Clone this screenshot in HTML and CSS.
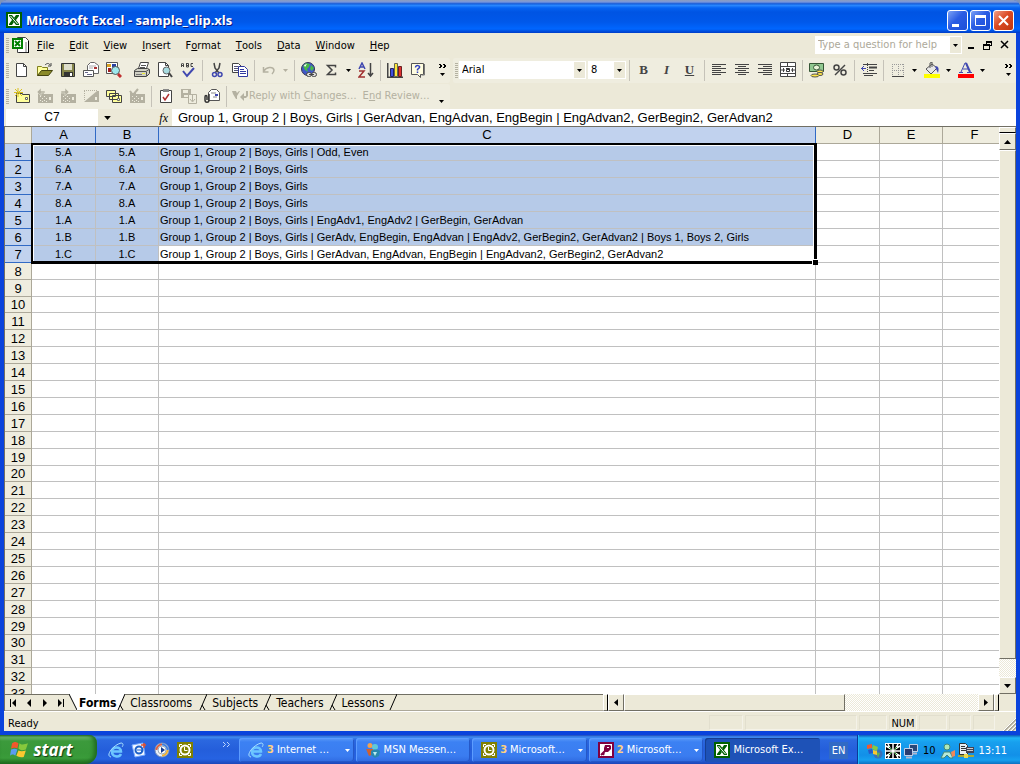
FILE: index.html
```html
<!DOCTYPE html>
<html lang="en">
<head>
<meta charset="utf-8">
<title>Microsoft Excel - sample_clip.xls</title>
<link rel="stylesheet" href="styles.css">
</head>
<body>
<svg class="sprite" aria-hidden="true">
  <symbol id="excel" viewBox="0 0 16 16"><path fill="#006000" d="M0 0h16v16H0z"/><path fill="#fff" d="M2 2h12v12H2z"/><path d="M3 3h3l7 9v1h-3L3 4zM13 3h-3L8 6l2 2 3-4zM3 13h3l2-3-2-2-3 4z" fill="#006000"/><path d="M4.500 4l7 8" stroke="#fff" fill="none"/></symbol>
  <symbol id="outlook" viewBox="0 0 16 16"><path fill="#808000" d="M0 0h16v16H0z"/><path d="M2.500 5V2.500H5M11 2.500h2.500V5M13.500 11v2.500H11M5 13.500H2.500V11" stroke="#fff" fill="none"/><circle cx="8" cy="8" r="4.500" stroke="#fff" stroke-width="2" fill="#808000"/><path d="M7.500 5v3.500h3" stroke="#fff" fill="none"/></symbol>
  <symbol id="access" viewBox="0 0 16 16"><path fill="#800040" d="M0 0h16v16H0z"/><path fill="#fff" d="M2 2h12v12H2z"/><path d="M3 13l5-5M5 13l1-2" stroke="#800040" stroke-width="2"/><path fill="#800040" d="M7 3h5l1 1v3l-3 3H7L6 9V6z"/><path fill="#fff" d="M9 5h2v1H9z"/></symbol>
  <symbol id="ie" viewBox="0 0 16 16"><path d="M13 12c-2 4-9 3-9-2.500C4 4 13 4 13 9.500H5" fill="none" stroke="#6cc6ff" stroke-width="2.500"/><path d="M3 15C-3 14 5 3 13 1c3 0 2 3 1 4" fill="none" stroke="#a8e0ff"/></symbol>
  <symbol id="down" viewBox="0 0 5 3"><path d="M0 0h5L2.500 3z" fill="currentColor"/></symbol>
  <symbol id="more" viewBox="0 0 8 14"><path d="M0 1l2 2-2 2M4 1l2 2-2 2M1 1l2 2-2 2M5 1l2 2-2 2" stroke="#000" fill="none"/><path d="M1 10h5l-2.500 3z"/></symbol>
  <symbol id="card" viewBox="0 0 16 16"><path d="M1 5h6v1h9v9H1z" fill="#b4b1a1"/><path d="M3 8h1v1H3zM5 10h1v1H5zM7 8h1v1H7zM9 10h1v1H9zM3 12h1v1H3zM7 12h1v1H7zM5 13h1v1H5zM9 13h1v1H9zM12 9h2v3h-2z" fill="#efeddf"/></symbol>
</svg>

<main class="window">
  <header class="titlebar">
    <svg class="icon"><use href="#excel"/></svg>
    <h1>Microsoft Excel - sample_clip.xls</h1>
    <button class="caption" aria-label="Minimize"><svg viewBox="0 0 19 19"><path d="M4 13h7v3H4z" fill="#fff"/></svg></button>
    <button class="caption" aria-label="Maximize"><svg viewBox="0 0 19 19"><path d="M4.500 5v9.500h10V5" fill="none" stroke="#fff"/><path d="M4 4h11v3H4z" fill="#fff"/></svg></button>
    <button class="caption close" aria-label="Close"><svg viewBox="0 0 19 19"><path d="M5 5l9 9M14 5l-9 9" stroke="#fff" stroke-width="2"/></svg></button>
  </header>

  <nav class="menubar">
    <span class="grip"></span>
    <svg class="book" viewBox="0 0 18 16"><path d="M5.500.500h8l3 3v12h-11z" fill="#fff" stroke="#444"/><path d="M14 5v10" stroke="#777"/><path d="M16.500 4v12H7" stroke="#000" fill="none"/><path fill="#008000" d="M0 1h11v11H0z"/><path fill="#fff" d="M2 3h7v7H2z"/><path d="M3 4l5 5M8 4L3 9" stroke="#008000" stroke-width="2"/></svg>
    <div class="menus">
      <button><u>F</u>ile</button><button><u>E</u>dit</button><button><u>V</u>iew</button><button><u>I</u>nsert</button><button>F<u>o</u>rmat</button><button><u>T</u>ools</button><button><u>D</u>ata</button><button><u>W</u>indow</button><button><u>H</u>ep</button>
    </div>
    <div class="question">
      <input type="text" aria-label="Question" placeholder="Type a question for help">
      <button aria-label="Recent questions"><svg class="arrow"><use href="#down"/></svg></button>
    </div>
    <button class="mdi" aria-label="Minimize workbook"><svg viewBox="0 0 10 10"><path d="M2 7h6v2H2z"/></svg></button>
    <button class="mdi" aria-label="Restore workbook"><svg viewBox="0 0 10 10"><path d="M3 1h6v5H7V5h1V3H4v1H3zM0 4h7v6H0zM1 6v3h5V6z" fill-rule="evenodd"/></svg></button>
    <button class="mdi" aria-label="Close workbook"><svg viewBox="0 0 10 10"><path d="M1 1l7 7M8 1L1 8" stroke="#000" stroke-width="1.500"/></svg></button>
  </nav>

  <div class="bars">
    <div class="toolbar standard">
      <span class="grip"></span>
      <button aria-label="New"><svg class="icon" viewBox="0 0 16 16"><path d="M2.500 1.500h7l3 3v10h-10z" fill="#fff" stroke="#444"/><path d="M9.500 1.500v3h3" fill="none" stroke="#444"/></svg></button>
      <button aria-label="Open"><svg class="icon" viewBox="0 0 16 16"><path d="M.500 13.500v-9h4l1 1h5v3" fill="#ffff9c" stroke="#808020"/><path d="M.500 13.500l4-5h11l-4 5z" fill="#8a8a28" stroke="#444410"/><path d="M8 3c2-2 4-2 5 0M14 1v3h-3" fill="none" stroke="#444"/></svg></button>
      <button aria-label="Save"><svg class="icon" viewBox="0 0 16 16"><path d="M1.500 1.500h13v13h-13z" fill="#84844a" stroke="#333"/><path d="M4 2h8v6H4z" fill="#dedecb"/><path d="M4 10h9v4H4z" fill="#333"/><path d="M10 11h2v3h-2z" fill="#fff"/></svg></button>
      <button aria-label="E-mail"><svg class="icon" viewBox="0 0 16 16"><path d="M4.500 8.500v-5l3-3h4l4 3v8h-6" fill="#fff" stroke="#666"/><path d="M6 4h7M6 6h4" stroke="#aaa"/><path d="M11 5h3v2h-3z" fill="#a33"/><path d="M.500 8.500h10v6H.500z" fill="#fff" stroke="#555"/><path d="M2 10.500h3M4 12.500h5" stroke="#668"/></svg></button>
      <button aria-label="Search"><svg class="icon" viewBox="0 0 16 16"><path d="M.500.500h11v11h-11z" fill="#fff" stroke="#555"/><path d="M1 2h4v3H1z" fill="#d8a020"/><path d="M6 2h4v3H6z" fill="#2840a0"/><path d="M2 6h3v4H2z" fill="#a02020"/><circle cx="9.500" cy="8.500" r="4" fill="#9ee8ee" stroke="#555"/><path d="M12 12l3 3" stroke="#c03030" stroke-width="3"/></svg></button>
      <span class="space"></span>
      <button aria-label="Print"><svg class="icon" viewBox="0 0 16 16"><path d="M4.500 6.500l2-6h8l-2 6z" fill="#fff" stroke="#444"/><path d="M7 3.500h5M6 5.500h5" stroke="#555"/><path d="M.500 8.500l3-2h10l2 1v4l-3 3h-12z" fill="#d0d0c4" stroke="#444"/><path d="M1 9.500h11l3-2M12.500 10v4" stroke="#555" fill="none"/><path d="M2 12.500h6" stroke="#777"/><path d="M8 11h3v1H8z" fill="#ee3"/></svg></button>
      <button aria-label="Print preview"><svg class="icon" viewBox="0 0 16 16"><path d="M1.500.500h7l3 3v11h-10z" fill="#fff" stroke="#444"/><path d="M8.500.500v3h3" fill="none" stroke="#444"/><circle cx="9.500" cy="8.500" r="3.500" fill="#a8dce0" stroke="#666"/><path d="M12 11l3 4" stroke="#444" stroke-width="2"/></svg></button>
      <button aria-label="Spelling"><svg class="icon" viewBox="0 0 16 16"><path d="M1.500 5V2l1-1 1 1v3M2 3.500h2M6.500 1v4h2V1.500H6M6 3.500h2M13 1.500h-2v3h2" stroke="#444" fill="none"/><path d="M3 9l4 5 7-8" fill="none" stroke="#4048b0" stroke-width="2"/></svg></button>
      <span class="sep"></span>
      <button aria-label="Cut"><svg class="icon" viewBox="0 0 16 16"><path d="M5 1l1 5 4 5M11 1l-1 5-4 5" stroke="#444" stroke-width="1.500" fill="none"/><circle cx="5.500" cy="12.500" r="2" fill="none" stroke="#4048b0" stroke-width="1.500"/><circle cx="11" cy="12.500" r="2" fill="none" stroke="#4048b0" stroke-width="1.500"/></svg></button>
      <button aria-label="Copy"><svg class="icon" viewBox="0 0 16 16"><path d="M.500 1.500h6l3 3v6h-9z" fill="#fff" stroke="#444"/><path d="M2 4.500h4M2 6.500h4M2 8.500h4" stroke="#557"/><path d="M6.500 4.500h6l3 3v7h-9z" fill="#fff" stroke="#3038a0"/><path d="M8 7.500h4M8 9.500h6M8 11.500h6" stroke="#3038a0"/></svg></button>
      <span class="sep"></span>
      <button aria-label="Undo"><svg class="icon" viewBox="0 0 16 16"><path d="M2.500 5v5h5M3 9c2-4 9-5 10-1 0 2-1 3-2 4" fill="none" stroke="#b4b1a1" stroke-width="1.500"/></svg></button>
      <button class="drop off" aria-label="Undo list"><svg class="arrow"><use href="#down"/></svg></button>
      <span class="sep"></span>
      <button aria-label="Insert hyperlink"><svg class="icon" viewBox="0 0 16 16"><circle cx="7" cy="7" r="6.500" fill="#4058c8" stroke="#335"/><path d="M5 1l4 1-1 3-2 2 1 3-3-2-2-4zM10 3l3 3-2 3-2-2z" fill="#48b848"/><path d="M3 3l3-1-2 3z" fill="#fff"/><rect x="5.500" y="10.500" width="5" height="4" rx="2" fill="#ddd" stroke="#444"/><rect x="10.500" y="10.500" width="5" height="4" rx="2" fill="#ddd" stroke="#444"/><path d="M8 12.500h5" stroke="#444"/></svg></button>
      <button aria-label="AutoSum"><svg class="icon" viewBox="0 0 16 16"><path d="M11.500 5.500v-2H3.500L8 8l-4.500 4.500h8v-2" fill="none" stroke="#444" stroke-width="1.500"/></svg></button>
      <button class="drop" aria-label="AutoSum list"><svg class="arrow"><use href="#down"/></svg></button>
      <button aria-label="Sort ascending"><svg class="icon" viewBox="0 0 16 16"><path d="M1 7l3-6 3 6M2 5h4" fill="none" stroke="#4048b0" stroke-width="1.500"/><path d="M1 9h5l-5 6h6" fill="none" stroke="#a03030" stroke-width="1.500"/><path d="M12.500 1v13M10 11l2.500 3 2.500-3" fill="none" stroke="#444" stroke-width="1.500"/></svg></button>
      <span class="sep"></span>
      <button aria-label="Chart"><svg class="icon" viewBox="0 0 16 16"><path d="M.500 1v14.500H16" fill="none" stroke="#444" stroke-width="2"/><path d="M3.500 6.500h3v8h-3z" fill="#4050e0" stroke="#226"/><path d="M7.500 1.500h3v13h-3z" fill="#ffe838" stroke="#665"/><path d="M11.500 4.500h3v10h-3z" fill="#e03030" stroke="#622"/></svg></button>
      <button aria-label="Help"><svg class="icon" viewBox="0 0 16 16"><path d="M1.500 1.500h12v11h-3v3l-3-3h-6z" fill="#fffde0" stroke="#555"/><path d="M14.500 2v11h-3" fill="none" stroke="#777"/><path d="M5.500 5.500c0-3 5-2 4 0l-2 2v1M7.500 9.500V11" fill="none" stroke="#3040c0" stroke-width="1.500"/></svg></button>
      <button class="options" aria-label="Standard toolbar options"><svg><use href="#more"/></svg></button>
    </div>
    <div class="toolbar formatting">
      <span class="grip"></span>
      <label class="combo font"><select aria-label="Font"><option>Arial</option></select><span><svg class="arrow"><use href="#down"/></svg></span></label>
      <label class="combo size"><select aria-label="Font size"><option>8</option></select><span><svg class="arrow"><use href="#down"/></svg></span></label>
      <span class="sep"></span>
      <button class="letter" aria-label="Bold"><b>B</b></button>
      <button class="letter" aria-label="Italic"><i>I</i></button>
      <button class="letter" aria-label="Underline"><u>U</u></button>
      <span class="sep"></span>
      <button aria-label="Align left"><svg class="icon" viewBox="0 0 16 16"><path d="M1 2.500h14M1 4.500h9M1 6.500h14M1 8.500h9M1 10.500h14M1 12.500h9" stroke="#444"/></svg></button>
      <button aria-label="Center"><svg class="icon" viewBox="0 0 16 16"><path d="M1 2.500h14M4 4.500h8M1 6.500h14M4 8.500h8M1 10.500h14M4 12.500h8" stroke="#444"/></svg></button>
      <button aria-label="Align right"><svg class="icon" viewBox="0 0 16 16"><path d="M1 2.500h14M6 4.500h9M1 6.500h14M6 8.500h9M1 10.500h14M6 12.500h9" stroke="#444"/></svg></button>
      <button aria-label="Merge and center"><svg class="icon" viewBox="0 0 16 16"><path d="M.500.500h15v14H.500z" fill="#fff" stroke="#444"/><path d="M0 4.500h16M0 11.500h16M7.500 0v4M7.500 12v3" stroke="#444"/><path d="M1 8h4M11 8h4M3.500 6v4M12.500 6v4" stroke="#444"/><path d="M6 6.500h3.500v3h-3v-2h3" fill="none" stroke="#333"/></svg></button>
      <span class="sep"></span>
      <button aria-label="Currency"><svg class="icon" viewBox="0 0 16 16"><path d="M.500 1.500h14v8H.500z" fill="#90c890" stroke="#355535"/><ellipse cx="7.500" cy="5.500" rx="3" ry="2.500" fill="#e8f4d8" stroke="#355535"/><ellipse cx="11" cy="9.500" rx="3" ry="1.500" fill="#ffe848" stroke="#555"/><ellipse cx="11" cy="12" rx="3" ry="1.500" fill="#ffe848" stroke="#555"/><ellipse cx="6" cy="13.500" rx="4" ry="1.500" fill="#ffe848" stroke="#555"/></svg></button>
      <button aria-label="Percent"><svg class="icon" viewBox="0 0 16 16"><circle cx="4.500" cy="5.500" r="2.500" fill="none" stroke="#444" stroke-width="1.500"/><circle cx="11.500" cy="10.500" r="2.500" fill="none" stroke="#444" stroke-width="1.500"/><path d="M13 3L3 13" stroke="#444" stroke-width="1.500"/></svg></button>
      <span class="sep"></span>
      <button aria-label="Decrease indent"><svg class="icon" viewBox="0 0 16 16"><path d="M2 2.500h14M8 8.500h5M2 11.500h14M3 13.500h9" stroke="#444"/><path d="M8 5.500h8" stroke="#444" stroke-width="2"/><path d="M0 6.500h5M3 4L.500 6.500 3 9" fill="none" stroke="#4048b0"/><path d="M6.500 1v14" stroke="#444" stroke-dasharray="1 1"/></svg></button>
      <span class="sep"></span>
      <button aria-label="Borders"><svg class="icon" viewBox="0 0 16 16"><path d="M2.500 2v12M8.500 2v12M13.500 2v12M2 2.500h12M2 8.500h12" stroke="#999" stroke-dasharray="1 1"/><path d="M2 14.500h12" stroke="#444"/></svg></button>
      <button class="drop" aria-label="Borders list"><svg class="arrow"><use href="#down"/></svg></button>
      <button aria-label="Fill color"><svg class="icon" viewBox="0 0 16 16"><path d="M2 7l6-5 5 4-6 6z" fill="#e8e8e8" stroke="#555"/><path d="M6 6V1l2-1v5" fill="none" stroke="#555"/><path d="M11 4c4 0 4 3 3 7l-2-4z" fill="#4048b0"/><path d="M0 12h16v4H0z" fill="#ff0"/></svg></button>
      <button class="drop" aria-label="Fill color list"><svg class="arrow"><use href="#down"/></svg></button>
      <button aria-label="Font color"><svg class="icon" viewBox="0 0 16 16"><path d="M3 10l4-9h1l4 9M5 7h6M1 10.500h4M9 10.500h5" fill="none" stroke="#4048b0"/><path d="M8 1l4 9" stroke="#4048b0" stroke-width="2"/><path d="M0 12h16v4H0z" fill="#f00"/></svg></button>
      <button class="drop" aria-label="Font color list"><svg class="arrow"><use href="#down"/></svg></button>
      <button class="options" aria-label="Formatting toolbar options"><svg><use href="#more"/></svg></button>
    </div>
  </div>

  <div class="bars">
    <div class="toolbar review">
      <span class="grip"></span>
      <button aria-label="New comment"><svg class="icon" viewBox="0 0 16 16"><path d="M2.500 5.500h6v1h7v8h-13z" fill="#ffff9c" stroke="#444"/><path d="M11.500 9.500h2v2h-2z" fill="#fff" stroke="#666"/><path d="M4 0v9M0 4.500h9M1 1l7 7M8 1L1 8" stroke="#d8c020"/></svg></button>
      <button disabled aria-label="Previous comment"><svg class="icon" viewBox="0 0 16 16"><use href="#card" width="16" height="16"/><path d="M0 4l4-4v3h4v2H4v3z" fill="#b4b1a1" stroke="#efeddf" stroke-width=".500"/></svg></button>
      <button disabled aria-label="Next comment"><svg class="icon" viewBox="0 0 16 16"><use href="#card" width="16" height="16"/><path d="M9 4L5 0v3H1v2h4v3z" fill="#b4b1a1" stroke="#efeddf" stroke-width=".500"/></svg></button>
      <button disabled aria-label="Show comment"><svg class="icon" viewBox="0 0 16 16"><path d="M1 14L14 3h2v11z" fill="#b4b1a1"/><path d="M1 2.500h14M1.500 3v10" fill="none" stroke="#b4b1a1" stroke-dasharray="1 1"/><path d="M12 9h2v3h-2z" fill="#efeddf"/></svg></button>
      <button aria-label="Show all comments"><svg class="icon" viewBox="0 0 16 16"><path d="M.500 2.500h9v6h-9zM3.500 5.500h9v6h-9zM6.500 7.500h9v7h-9z" fill="#ffff9c" stroke="#444"/><path d="M11.500 10.500h2v2h-2z" fill="#fff" stroke="#666"/></svg></button>
      <button disabled aria-label="Delete comment"><svg class="icon" viewBox="0 0 16 16"><use href="#card" width="16" height="16"/><path d="M1 3l3 4 5-6" fill="none" stroke="#b4b1a1" stroke-width="2"/></svg></button>
      <span class="sep"></span>
      <button aria-label="Create task"><svg class="icon" viewBox="0 0 16 16"><path d="M2.500 2.500h11v12h-11z" fill="#fff" stroke="#444"/><path d="M5 1h6v3H5z" fill="#888"/><path d="M5 9l2 3 4-6" fill="none" stroke="#b03030" stroke-width="1.500"/></svg></button>
      <button disabled aria-label="Update file"><svg class="icon" viewBox="0 0 16 16"><path d="M0 1h10v9H0z" fill="#b4b1a1"/><path d="M2 2h5v3H2zM3 7h4v2H3z" fill="#efeddf"/><path d="M7.500 6.500h8v9h-8z" fill="#efeddf" stroke="#b4b1a1"/><path d="M11.500 7v6M9 11l2.500 3 2.500-3" fill="none" stroke="#b4b1a1"/></svg></button>
      <button aria-label="Send by mail"><svg class="icon" viewBox="0 0 16 16"><path d="M4.500 12.500v-8l3-3h5l3 3v8z" fill="#fff" stroke="#555"/><path d="M7 5h5M9 9h4" stroke="#888"/><path d="M11 6h3v2h-3z" fill="#4048b0"/><path d="M5 6v6c0 3-4 3-4 0V9c0-2 2-2 2 0v3" fill="none" stroke="#333" stroke-width="1.500"/></svg></button>
      <span class="sep"></span>
      <button disabled class="text"><svg class="icon" viewBox="0 0 16 16"><path d="M0 3h4l1 2 2-2h1L5 8v3H4L1 6zM8 9l4-4v3h2V3h2v5l-2 2h-2v3z" fill="#b4b1a1"/></svg><span>Reply with <u>C</u>hanges…</span></button>
      <button disabled class="text"><span>E<u>n</u>d Review…</span></button>
      <button class="drop low" aria-label="Reviewing toolbar options"><svg class="arrow"><use href="#down"/></svg></button>
    </div>
  </div>

  <div class="formula">
    <input class="name" type="text" value="C7" aria-label="Name box">
    <button class="namelist" aria-label="Names"><svg class="arrow wide"><use href="#down"/></svg></button>
    <button class="fx" aria-label="Insert function"><i>fx</i></button>
    <input class="content" type="text" aria-label="Formula bar" value="Group 1, Group 2 | Boys, Girls | GerAdvan, EngAdvan, EngBegin | EngAdvan2, GerBegin2, GerAdvan2">
  </div>

  <section class="sheet">
    <div class="cells">
      <table>
        <colgroup><col class="w-head"><col class="w-a"><col class="w-b"><col class="w-c"><col class="w-a"><col class="w-b"><col></colgroup>
        <thead><tr><th></th><th class="on">A</th><th class="on">B</th><th class="on">C</th><th>D</th><th>E</th><th>F</th></tr></thead>
        <tbody>
          <tr class="on"><th>1</th><td>5.A</td><td>5.A</td><td>Group 1, Group 2 | Boys, Girls | Odd, Even</td><td><td><td>
          <tr class="on"><th>2</th><td>6.A</td><td>6.A</td><td>Group 1, Group 2 | Boys, Girls</td><td><td><td>
          <tr class="on"><th>3</th><td>7.A</td><td>7.A</td><td>Group 1, Group 2 | Boys, Girls</td><td><td><td>
          <tr class="on"><th>4</th><td>8.A</td><td>8.A</td><td>Group 1, Group 2 | Boys, Girls</td><td><td><td>
          <tr class="on"><th>5</th><td>1.A</td><td>1.A</td><td>Group 1, Group 2 | Boys, Girls | EngAdv1, EngAdv2 | GerBegin, GerAdvan</td><td><td><td>
          <tr class="on"><th>6</th><td>1.B</td><td>1.B</td><td>Group 1, Group 2 | Boys, Girls | GerAdv, EngBegin, EngAdvan | EngAdv2, GerBegin2, GerAdvan2 | Boys 1, Boys 2, Girls</td><td><td><td>
          <tr class="on"><th>7</th><td>1.C</td><td>1.C</td><td class="active">Group 1, Group 2 | Boys, Girls | GerAdvan, EngAdvan, EngBegin | EngAdvan2, GerBegin2, GerAdvan2</td><td><td><td>
          <tr><th>8<td><td><td><td><td><td>
          <tr><th>9<td><td><td><td><td><td>
          <tr><th>10<td><td><td><td><td><td>
          <tr><th>11<td><td><td><td><td><td>
          <tr><th>12<td><td><td><td><td><td>
          <tr><th>13<td><td><td><td><td><td>
          <tr><th>14<td><td><td><td><td><td>
          <tr><th>15<td><td><td><td><td><td>
          <tr><th>16<td><td><td><td><td><td>
          <tr><th>17<td><td><td><td><td><td>
          <tr><th>18<td><td><td><td><td><td>
          <tr><th>19<td><td><td><td><td><td>
          <tr><th>20<td><td><td><td><td><td>
          <tr><th>21<td><td><td><td><td><td>
          <tr><th>22<td><td><td><td><td><td>
          <tr><th>23<td><td><td><td><td><td>
          <tr><th>24<td><td><td><td><td><td>
          <tr><th>25<td><td><td><td><td><td>
          <tr><th>26<td><td><td><td><td><td>
          <tr><th>27<td><td><td><td><td><td>
          <tr><th>28<td><td><td><td><td><td>
          <tr><th>29<td><td><td><td><td><td>
          <tr><th>30<td><td><td><td><td><td>
          <tr><th>31<td><td><td><td><td><td>
          <tr><th>32<td><td><td><td><td><td>
          <tr><th>33<td><td><td><td><td><td>
        </tbody>
      </table>
      <div class="selection"></div>
    </div>
    <div class="vscroll">
      <span class="split"></span>
      <button aria-label="Scroll up"><svg viewBox="0 0 7 4"><path d="M0 4h7L3.500 0z"/></svg></button>
      <span class="thumb"></span><span class="track"></span>
      <button aria-label="Scroll down"><svg viewBox="0 0 7 4"><path d="M0 0h7L3.500 4z"/></svg></button>
    </div>
  </section>

  <div class="bottom">
    <div class="tabs">
      <button class="step" aria-label="First sheet"><svg viewBox="0 0 8 8"><path d="M1 0h1v8H1zM7 0v8L3 4z"/></svg></button>
      <button class="step" aria-label="Previous sheet"><svg viewBox="0 0 8 8"><path d="M6 0v8L2 4z"/></svg></button>
      <button class="step" aria-label="Next sheet"><svg viewBox="0 0 8 8"><path d="M2 0v8l4-4z"/></svg></button>
      <button class="step" aria-label="Last sheet"><svg viewBox="0 0 8 8"><path d="M6 0h1v8H6zM1 0v8l4-4z"/></svg></button>
      <svg class="slant" viewBox="0 0 8 17"><path d="M0 0h8v17z" fill="#fff"/><path d="M0 0l8 16" stroke="#000"/></svg>
      <button class="tab current">Forms</button>
      <svg class="slant" viewBox="0 0 8 17"><path d="M0 0h8L2 16H0z" fill="#fff"/><path d="M8 0L1 16M3 11l3 5" stroke="#000" fill="none"/></svg>
      <button class="tab long">Classrooms</button>
      <svg class="slant" viewBox="0 0 8 17"><path d="M8 0L1 16M3 11l3 5" stroke="#000" fill="none"/></svg>
      <button class="tab">Subjects</button>
      <svg class="slant" viewBox="0 0 8 17"><path d="M8 0L1 16M3 11l3 5" stroke="#000" fill="none"/></svg>
      <button class="tab">Teachers</button>
      <svg class="slant" viewBox="0 0 8 17"><path d="M8 0L1 16M3 11l3 5" stroke="#000" fill="none"/></svg>
      <button class="tab">Lessons</button>
      <svg class="slant" viewBox="0 0 8 17"><path d="M8 0L1 16" stroke="#000" fill="none"/></svg>
    </div>
    <div class="hscroll">
      <span class="split"></span>
      <button aria-label="Scroll left"><svg viewBox="0 0 4 7"><path d="M4 0v7L0 3.500z"/></svg></button>
      <span class="thumb"></span><span class="track"></span>
      <button aria-label="Scroll right"><svg viewBox="0 0 4 7"><path d="M0 0v7l4-3.500z"/></svg></button>
      <span class="split"></span>
    </div>
  </div>

  <footer class="status">
    <span class="ready">Ready</span>
    <span class="pane p1"></span><span class="pane p2"></span><span class="pane p3"></span>
    <span class="pane p3">NUM</span><span class="pane p3"></span><span class="pane p4"></span><span class="pane p4"></span>
    <svg class="resize" viewBox="0 0 13 13"><path d="M1 13L13 1M5 13l8-8M9 13l4-4" stroke="#aca899" stroke-width="2"/><path d="M0 13L13 0M4 13l9-9M8 13l5-5" stroke="#fff"/></svg>
  </footer>
</main>

<div class="taskbar">
  <button class="start"><svg viewBox="0 0 18 18"><path d="M2 3c3-2 4-1 6 0L7 8C5 7 4 7 1 8z" fill="#f0582c"/><path d="M9 3c2 2 5 1 8 0l-2 6c-3 1-5 1-7-1z" fill="#86c83c"/><path d="M1 9c3-1 4-1 6 0l-2 6c-2-2-4-1-5 0z" fill="#5a9cf0"/><path d="M8 10c2 1 4 1 7 0l-2 6c-3 1-5 0-7-1z" fill="#fbc830"/></svg>start</button>
  <div class="quick">
    <button aria-label="Internet Explorer"><svg class="icon"><use href="#ie"/></svg></button>
    <button aria-label="Outlook Express"><svg class="icon" viewBox="0 0 16 16"><path d="M1 3l11-2 2 12-10 2z" fill="#f4f8ff" stroke="#7af"/><circle cx="8" cy="8" r="3.500" fill="none" stroke="#1c60c8" stroke-width="2"/><path d="M6 8h5l-1 3" stroke="#1c60c8" fill="none"/><path d="M10 3h5M13 1v5" fill="none" stroke="#e05030" stroke-width="1.500"/></svg></button>
    <button aria-label="Media Player"><svg class="icon" viewBox="0 0 16 16"><circle cx="8" cy="8" r="7" fill="#e8eef8" stroke="#7890b8"/><path d="M2.500 8A5.500 5.500 0 0 1 8 2.500" stroke="#e06040" stroke-width="2" fill="none"/><path d="M8 2.500A5.500 5.500 0 0 1 13.500 8" stroke="#4080e0" stroke-width="2" fill="none"/><path d="M13.500 8A5.500 5.500 0 0 1 8 13.500" stroke="#f0b030" stroke-width="2" fill="none"/><circle cx="8" cy="8" r="4" fill="#fff" stroke="#9ab"/><path d="M7 5l4 3-4 3z" fill="#123a90"/></svg></button>
    <button aria-label="Outlook"><svg class="icon"><use href="#outlook"/></svg></button>
    <button class="chev" aria-label="More quick launch"><svg viewBox="0 0 8 6"><path d="M0 0l2.500 2.500L0 5M4 0l2.500 2.500L4 5" stroke="#bcd6ff" fill="none"/></svg></button>
  </div>
  <div class="tasks">
    <button class="task"><svg class="icon"><use href="#ie"/></svg><b>3</b><span>Internet …</span><svg class="arrow"><use href="#down"/></svg></button>
    <button class="task"><svg class="icon" viewBox="0 0 16 16"><circle cx="5" cy="3.500" r="2.500" fill="#f0a050"/><path d="M1 7h7l1 5-5 2z" fill="#d06030"/><circle cx="10" cy="5" r="3" fill="#60c8d8"/><path d="M6 9c2-2 7-2 9 0l-1 5-4 2-4-3z" fill="#2888b0"/><path d="M8 10l2 4 2-4" fill="#b8ecf0"/></svg><span>MSN Messen…</span></button>
    <button class="task"><svg class="icon"><use href="#outlook"/></svg><b>3</b><span>Microsoft…</span><svg class="arrow"><use href="#down"/></svg></button>
    <button class="task"><svg class="icon"><use href="#access"/></svg><b>2</b><span>Microsoft…</span><svg class="arrow"><use href="#down"/></svg></button>
    <button class="task pressed"><svg class="icon"><use href="#excel"/></svg><span>Microsoft Ex…</span></button>
  </div>
  <button class="lang">EN</button>
  <div class="tray">
    <svg class="icon" viewBox="0 0 16 16"><circle cx="11" cy="11" r="4.500" fill="#3a70b8"/><path d="M9 9l4 1-2 5z" fill="#60b050"/><path d="M0 2l5-1v4L0 6z" fill="#f05a30"/><path d="M6 2l5 2-1 4-5-2z" fill="#88c840"/><path d="M1 7l4-1 1 4-4 1z" fill="#2858c8"/><path d="M6 7l4 1v4l-4-1z" fill="#f8c830"/></svg>
    <svg class="icon" viewBox="0 0 16 16"><path fill="#fff" d="M0 0h16v16H0z"/><path fill="#000" d="M1 1h14v14H1z"/><path d="M1 3l5 3M3 1l2 4M15 3l-5 3M13 1l-2 4M1 13l5-3M3 15l2-4M15 13l-5-3M13 15l-2-4M8 1v5M8 10v5M1 8h5M10 8h5" stroke="#fff" stroke-width="1.500"/><path d="M4 4l8 8M12 4l-8 8" stroke="#28a028"/><circle cx="8" cy="8" r="2" fill="#fff"/></svg>
    <svg class="icon" viewBox="0 0 16 16"><path d="M6.500 1.500h8v7h-8z" fill="#284878" stroke="#c0d0e8"/><path d="M1.500 5.500h8v7h-8z" fill="#283c70" stroke="#c0d0e8"/><path d="M3 14.500h6M9 10.500h5" stroke="#b0b8d0" stroke-width="2"/></svg>
    <span class="count">10</span>
    <svg class="icon" viewBox="0 0 16 16"><circle cx="7" cy="4" r="3" fill="#b0e8b8" stroke="#487"/><path d="M1 15l3-6h6l3 6h-3l-3-3-3 3z" fill="#b8e8d8" stroke="#487"/><path d="M11 9l4-2v6l-3 1z" fill="#f08858"/></svg>
    <svg class="icon" viewBox="0 0 16 16"><path d="M1.500.500h6l2 2v9h-8z" fill="#e8eef4" stroke="#333"/><path d="M3 3.500h4M3 5.500h5M3 7.500h5" stroke="#333"/><path d="M8 4h8v6H8z" fill="#445"/><path d="M9 5h6v1H9zM9 7h6v1H9z" fill="#ccc"/><path d="M0 13h16" stroke="#a8a838" stroke-width="2"/><path d="M6 11h4v4H6z" fill="#e8d850"/></svg>
    <time>13:11</time>
  </div>
</div>
</body>
</html>
```
FILE: styles.css
```css
* { box-sizing: border-box; }
body {
  margin: 0;
  height: 100vh;
  display: flex;
  flex-direction: column;
  overflow: hidden;
  font: 11px/14px "DejaVu Sans Condensed", Tahoma, sans-serif;
  color: #000;
  background: #7f93b8;
}
button, input, select { font: inherit; color: inherit; background: none; border: 0; padding: 0; margin: 0; border-radius: 0; outline: 0; }
button { display: flex; align-items: center; justify-content: center; white-space: nowrap; }
svg { display: block; flex: none; }
.sprite { position: absolute; width: 0; height: 0; }
.icon { width: 16px; height: 16px; }
.arrow { width: 5px; height: 3px; }
.arrow.wide { width: 7px; height: 4px; }

/* Window frame */
.window {
  flex: 1;
  min-height: 0;
  display: flex;
  flex-direction: column;
  border: solid #0a43dc;
  border-width: 0 4px 4px;
  border-radius: 8px 8px 0 0;
  background: #ece9d8;
}
.titlebar {
  height: 33px;
  margin: 0 -4px;
  padding: 7px 6px 0;
  display: flex;
  align-items: center;
  gap: 2px;
  flex: none;
  border-radius: 7px 7px 0 0;
  background: linear-gradient(#8b9dbe 0, #7a96dc 2px, #0a55d8 4px, #2f8cff 5px, #0562f2 8px, #0054e3 12px, #0058ea 22px, #0066ff 29px, #0050e0 31px, #003dc8 33px);
}
.titlebar h1 {
  flex: 1;
  margin: 0 0 0 2px;
  font: bold 13px/18px "Open Sans", sans-serif;
  color: #fff;
  text-shadow: 1px 1px #0a1883;
}
.caption {
  width: 21px;
  height: 21px;
  border: 1px solid #fff;
  border-radius: 3px;
  background: linear-gradient(135deg, #7da2f5, #2a5ce4 45%, #1c50d8);
}
.caption svg { width: 19px; height: 19px; }
.caption.close { background: linear-gradient(135deg, #f0a088, #dc4a24 45%, #c03610); }

/* Menus and toolbars */
.grip {
  width: 3px;
  height: 15px;
  margin: 0 1px 0 2px;
  flex: none;
  background: repeating-linear-gradient(#b4b1a1 0 1px, transparent 1px 2px);
}
.menubar { display: flex; align-items: center; height: 24px; flex: none; padding-right: 3px; }
.book { width: 18px; height: 16px; margin-left: 2px; }
.menus { display: flex; gap: 15px; flex: 1; padding: 1px 0 0 7px; }
.question { display: flex; width: 147px; height: 18px; background: #fff; }
.question input { flex: 1; min-width: 0; padding-left: 3px; }
.question input::placeholder { color: #aca899; opacity: 1; }
.question button { width: 11px; margin: 1px; background: #ece9d8; }
.mdi { width: 17px; height: 18px; }
.mdi svg { width: 10px; height: 10px; }
.bars { display: flex; height: 26px; flex: none; align-items: center; gap: 3px; }
.toolbar { display: flex; align-items: center; height: 25px; background: #efeddf; border-radius: 2px; }
.toolbar > button { width: 23px; height: 22px; flex: none; }
.toolbar .drop { width: 11px; }
.toolbar .drop.off { color: #b4b1a1; }
.toolbar .drop.low { width: 17px; padding-top: 10px; }
.toolbar .options { width: 14px; margin-left: auto; }
.options svg { width: 8px; height: 14px; }
.standard { width: 446px; }
.formatting { flex: 1; }
.space { width: 5px; }
.sep { width: 1px; height: 21px; margin: 0 2px 0 3px; flex: none; background: #c5c2b8; }
.combo { display: flex; height: 18px; background: #fff; }
.combo select { appearance: none; flex: 1; min-width: 0; padding-left: 3px; }
.combo span { width: 11px; margin: 1px; background: #ece9d8; display: flex; align-items: center; justify-content: center; }
.combo.font { width: 127px; margin-right: 2px; }
.combo.size { width: 38px; }
.letter { font: bold 13px/16px "Liberation Serif", serif; color: #444; }
.toolbar .text { width: auto; color: #b4b1a1; gap: 1px; padding: 0 3px; }

/* Formula bar */
.formula { display: flex; height: 17px; flex: none; padding-left: 2px; font: 13px/17px "Liberation Sans", sans-serif; }
.formula .name { width: 92px; background: #fff; text-align: center; font-size: 12px; }
.namelist { width: 19px; }
.fx { flex: none; width: 55px; justify-content: flex-end; padding-right: 4px; font: italic 12px/16px "Liberation Serif", serif; }
.content { flex: 1; background: #fff; padding-left: 6px; }

/* Worksheet */
.sheet { flex: 1; min-height: 0; display: flex; border-top: 1px solid #716f64; border-left: 1px solid #716f64; }
.cells { flex: 1; min-width: 0; position: relative; overflow: hidden; background: #fff; }
table { width: calc(100% + 8px); table-layout: fixed; border-collapse: separate; border-spacing: 0; }
.w-head { width: 27px; }
.w-a { width: 64px; }
.w-b { width: 63px; }
.w-c { width: 657px; }
tr { height: 17px; }
tbody tr:nth-child(10n) { height: 16px; }
th, td { padding: 0; border-right: 1px solid #c0c0c0; border-bottom: 1px solid #c0c0c0; white-space: nowrap; overflow: hidden; }
th { font: 13px/15px "Liberation Sans", sans-serif; background: #efeddf; border-color: #aca899; }
thead th { line-height: 16px; }
td { font: 11px/15px "Liberation Sans", sans-serif; text-align: center; }
.on td { padding-top: 1px; }
td:nth-child(4) { text-align: left; padding-left: 1px; }
th.on, .on th { background: #c1d2ee; border-color: #316ac5; }
.on td:nth-child(-n+4) { background: #b6cae8; }
.on td.active { background: #fff; }
.selection {
  position: absolute;
  left: 26px;
  top: 16px;
  width: 786px;
  height: 121px;
  border: solid #000;
  border-width: 2px 3px 3px 2px;
  box-shadow: inset 1px 1px #fff, inset -1px 0 #fff;
}
.selection::after { content: ""; position: absolute; right: -4px; bottom: -4px; width: 5px; height: 5px; background: #000; border: solid #fff; border-width: 1px 0 0 1px; box-sizing: content-box; }

/* Scroll bars */
.vscroll { width: 17px; flex: none; display: flex; flex-direction: column; }
.split, .thumb, .vscroll button, .hscroll button { background: #ece9d8; border: 1px solid; border-color: #fff #716f64 #716f64 #fff; }
.vscroll .split { height: 6px; border-bottom: 1px solid #000; }
.vscroll button { height: 17px; }
.vscroll button svg { width: 7px; height: 4px; }
.vscroll .thumb { flex: 510; }
.vscroll .track { flex: 18; }
.track { background: repeating-conic-gradient(#fff 0 25%, #ece9d8 0 50%) 0 0 / 2px 2px; }
.bottom { display: flex; height: 17px; flex: none; padding-right: 17px; border-left: 1px solid #716f64; }
.tabs { flex: 597; min-width: 0; display: flex; border-top: 1px solid #716f64; border-bottom: 1px solid #aca899; }
.step { width: 16px; }
.step svg { width: 8px; height: 8px; }
.slant { width: 8px; height: 17px; margin-top: -1px; }
.tab { padding: 1px 5px 0; font-size: 12px; height: 15px; }
.tab.current { background: #fff; font-weight: bold; height: 16px; margin-top: -1px; padding: 2px 1px 0 2px; }
.tab.long { padding-right: 7px; }
.hscroll { flex: 396; min-width: 0; display: flex; }
.hscroll .split { width: 5px; border-right-color: #000; }
.hscroll button { width: 16px; }
.hscroll button svg { width: 4px; height: 7px; }
.hscroll .thumb { flex: 219; }
.hscroll .track { flex: 133; }

/* Status bar */
.status { display: flex; height: 20px; flex: none; border-top: 1px solid #fff; padding: 3px 0 0 4px; gap: 2px; }
.ready { flex: 1; line-height: 17px; }
.pane { flex: none; height: 15px; line-height: 15px; text-align: center; border: 1px solid; border-color: #e2dfce #f4f2e8 #f4f2e8 #e2dfce; }
.p1 { width: 34px; }
.p2 { width: 112px; }
.p3 { width: 28px; }
.p4 { width: 22px; }
.resize { width: 13px; height: 13px; margin: 3px 0 0 6px; }

/* Taskbar */
.taskbar {
  height: 29px;
  flex: none;
  display: flex;
  color: #fff;
  background: linear-gradient(#1c46b8 0, #3f8cf0 2px, #2b68e0 5px, #245edb 15px, #2663e2 24px, #1c46b8 29px);
}
.start {
  width: 97px;
  gap: 4px;
  padding-right: 14px;
  border-radius: 0 8px 12px 0;
  font: italic bold 17px/24px "Open Sans", sans-serif;
  text-shadow: 1px 1px 1px #123a12;
  background: linear-gradient(#2a6a2a 0, #6cb86c 2px, #3c9a3c 6px, #389838 18px, #3a9c3a 23px, #1f6a1f 29px);
  box-shadow: inset -3px 0 4px #1f6a1f;
}
.start svg { width: 19px; height: 19px; }
.quick { width: 142px; display: flex; align-items: center; gap: 7px; padding-left: 11px; }
.chev { margin: 0 8px 10px auto; }
.chev svg { width: 8px; height: 6px; }
.tasks { flex: 1; min-width: 0; display: flex; gap: 2px; padding: 3px 0 2px; }
.task {
  flex: 1;
  min-width: 0;
  gap: 3px;
  padding: 0 4px 0 9px;
  justify-content: flex-start;
  border-radius: 3px;
  background: linear-gradient(#5a9af8, #3c81f3 4px, #3a7cf0 18px, #2f6ae0);
  box-shadow: inset 1px 1px #5c9cff, inset -1px -1px #2558c8;
}
.task b { color: #ffd080; }
.task .arrow { margin-left: auto; }
.task.pressed { background: #1e52b7; box-shadow: inset 1px 1px #163f92; }
.lang { width: 19px; height: 17px; margin: 7px 9px 0; background: #316ac5; flex: none; }
.tray {
  flex: none;
  display: flex;
  align-items: center;
  gap: 2px;
  width: 163px;
  padding: 2px 13px 0 9px;
  border-left: 1px solid #0a3a98;
  background: linear-gradient(#0c59b9 0, #1fb4f6 3px, #18a0ee 7px, #1290e8 20px, #15a0f0 25px, #0d70c0 29px);
  box-shadow: inset 1px 0 #1fb8f8;
}
.count { color: #000; margin: 0 2px; }
.tray time { margin-left: auto; }
```
